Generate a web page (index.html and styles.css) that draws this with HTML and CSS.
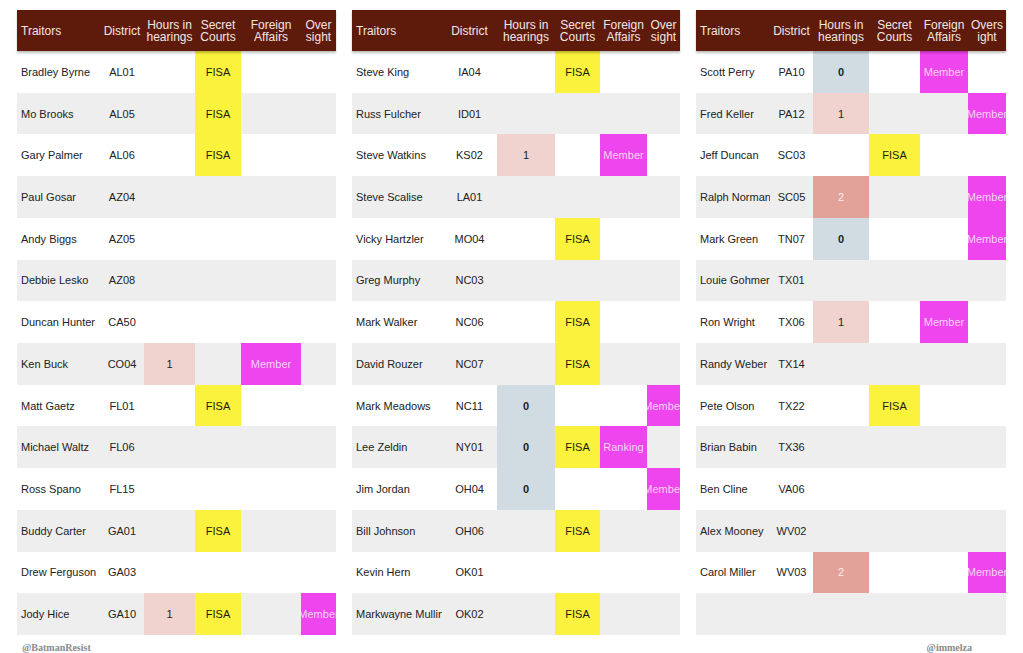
FILE: index.html
```html
<!DOCTYPE html>
<html>
<head>
<meta charset="utf-8">
<link rel="stylesheet" href="styles.css">
</head>
<body>
<div class="page">
  <div class="panels">
    <div class="panel t1">
      <div class="row head">
        <div class="cell name">Traitors</div><div class="cell">District</div><div class="cell">Hours in<br>hearings</div><div class="cell">Secret<br>Courts</div><div class="cell">Foreign<br>Affairs</div><div class="cell">Over<br>sight</div>
      </div>
      <div class="body">
        <div class="row"><div class="cell name">Bradley Byrne</div><div class="cell">AL01</div><div class="cell"></div><div class="cell fisa">FISA</div><div class="cell"></div><div class="cell"></div></div>
        <div class="row"><div class="cell name">Mo Brooks</div><div class="cell">AL05</div><div class="cell"></div><div class="cell fisa">FISA</div><div class="cell"></div><div class="cell"></div></div>
        <div class="row"><div class="cell name">Gary Palmer</div><div class="cell">AL06</div><div class="cell"></div><div class="cell fisa">FISA</div><div class="cell"></div><div class="cell"></div></div>
        <div class="row"><div class="cell name">Paul Gosar</div><div class="cell">AZ04</div><div class="cell"></div><div class="cell"></div><div class="cell"></div><div class="cell"></div></div>
        <div class="row"><div class="cell name">Andy Biggs</div><div class="cell">AZ05</div><div class="cell"></div><div class="cell"></div><div class="cell"></div><div class="cell"></div></div>
        <div class="row"><div class="cell name">Debbie Lesko</div><div class="cell">AZ08</div><div class="cell"></div><div class="cell"></div><div class="cell"></div><div class="cell"></div></div>
        <div class="row"><div class="cell name">Duncan Hunter</div><div class="cell">CA50</div><div class="cell"></div><div class="cell"></div><div class="cell"></div><div class="cell"></div></div>
        <div class="row"><div class="cell name">Ken Buck</div><div class="cell">CO04</div><div class="cell h1">1</div><div class="cell"></div><div class="cell mem">Member</div><div class="cell"></div></div>
        <div class="row"><div class="cell name">Matt Gaetz</div><div class="cell">FL01</div><div class="cell"></div><div class="cell fisa">FISA</div><div class="cell"></div><div class="cell"></div></div>
        <div class="row"><div class="cell name">Michael Waltz</div><div class="cell">FL06</div><div class="cell"></div><div class="cell"></div><div class="cell"></div><div class="cell"></div></div>
        <div class="row"><div class="cell name">Ross Spano</div><div class="cell">FL15</div><div class="cell"></div><div class="cell"></div><div class="cell"></div><div class="cell"></div></div>
        <div class="row"><div class="cell name">Buddy Carter</div><div class="cell">GA01</div><div class="cell"></div><div class="cell fisa">FISA</div><div class="cell"></div><div class="cell"></div></div>
        <div class="row"><div class="cell name">Drew Ferguson</div><div class="cell">GA03</div><div class="cell"></div><div class="cell"></div><div class="cell"></div><div class="cell"></div></div>
        <div class="row"><div class="cell name">Jody Hice</div><div class="cell">GA10</div><div class="cell h1">1</div><div class="cell fisa">FISA</div><div class="cell"></div><div class="cell mem">Member</div></div>
      </div>
    </div>

    <div class="panel t2">
      <div class="row head">
        <div class="cell name">Traitors</div><div class="cell">District</div><div class="cell">Hours in<br>hearings</div><div class="cell">Secret<br>Courts</div><div class="cell">Foreign<br>Affairs</div><div class="cell">Over<br>sight</div>
      </div>
      <div class="body">
        <div class="row"><div class="cell name">Steve King</div><div class="cell">IA04</div><div class="cell"></div><div class="cell fisa">FISA</div><div class="cell"></div><div class="cell"></div></div>
        <div class="row"><div class="cell name">Russ Fulcher</div><div class="cell">ID01</div><div class="cell"></div><div class="cell"></div><div class="cell"></div><div class="cell"></div></div>
        <div class="row"><div class="cell name">Steve Watkins</div><div class="cell">KS02</div><div class="cell h1">1</div><div class="cell"></div><div class="cell mem">Member</div><div class="cell"></div></div>
        <div class="row"><div class="cell name">Steve Scalise</div><div class="cell">LA01</div><div class="cell"></div><div class="cell"></div><div class="cell"></div><div class="cell"></div></div>
        <div class="row"><div class="cell name">Vicky Hartzler</div><div class="cell">MO04</div><div class="cell"></div><div class="cell fisa">FISA</div><div class="cell"></div><div class="cell"></div></div>
        <div class="row"><div class="cell name">Greg Murphy</div><div class="cell">NC03</div><div class="cell"></div><div class="cell"></div><div class="cell"></div><div class="cell"></div></div>
        <div class="row"><div class="cell name">Mark Walker</div><div class="cell">NC06</div><div class="cell"></div><div class="cell fisa">FISA</div><div class="cell"></div><div class="cell"></div></div>
        <div class="row"><div class="cell name">David Rouzer</div><div class="cell">NC07</div><div class="cell"></div><div class="cell fisa">FISA</div><div class="cell"></div><div class="cell"></div></div>
        <div class="row"><div class="cell name">Mark Meadows</div><div class="cell">NC11</div><div class="cell h0">0</div><div class="cell"></div><div class="cell"></div><div class="cell mem">Member</div></div>
        <div class="row"><div class="cell name">Lee Zeldin</div><div class="cell">NY01</div><div class="cell h0">0</div><div class="cell fisa">FISA</div><div class="cell mem">Ranking</div><div class="cell"></div></div>
        <div class="row"><div class="cell name">Jim Jordan</div><div class="cell">OH04</div><div class="cell h0">0</div><div class="cell"></div><div class="cell"></div><div class="cell mem">Member</div></div>
        <div class="row"><div class="cell name">Bill Johnson</div><div class="cell">OH06</div><div class="cell"></div><div class="cell fisa">FISA</div><div class="cell"></div><div class="cell"></div></div>
        <div class="row"><div class="cell name">Kevin Hern</div><div class="cell">OK01</div><div class="cell"></div><div class="cell"></div><div class="cell"></div><div class="cell"></div></div>
        <div class="row"><div class="cell name">Markwayne Mullin</div><div class="cell">OK02</div><div class="cell"></div><div class="cell fisa">FISA</div><div class="cell"></div><div class="cell"></div></div>
      </div>
    </div>

    <div class="panel t3">
      <div class="row head">
        <div class="cell name">Traitors</div><div class="cell">District</div><div class="cell">Hours in<br>hearings</div><div class="cell">Secret<br>Courts</div><div class="cell">Foreign<br>Affairs</div><div class="cell">Overs<br>ight</div>
      </div>
      <div class="body">
        <div class="row"><div class="cell name">Scott Perry</div><div class="cell">PA10</div><div class="cell h0">0</div><div class="cell"></div><div class="cell mem">Member</div><div class="cell"></div></div>
        <div class="row"><div class="cell name">Fred Keller</div><div class="cell">PA12</div><div class="cell h1">1</div><div class="cell"></div><div class="cell"></div><div class="cell mem">Member</div></div>
        <div class="row"><div class="cell name">Jeff Duncan</div><div class="cell">SC03</div><div class="cell"></div><div class="cell fisa">FISA</div><div class="cell"></div><div class="cell"></div></div>
        <div class="row"><div class="cell name">Ralph Norman</div><div class="cell">SC05</div><div class="cell h2">2</div><div class="cell"></div><div class="cell"></div><div class="cell mem">Member</div></div>
        <div class="row"><div class="cell name">Mark Green</div><div class="cell">TN07</div><div class="cell h0">0</div><div class="cell"></div><div class="cell"></div><div class="cell mem">Member</div></div>
        <div class="row"><div class="cell name">Louie Gohmert</div><div class="cell">TX01</div><div class="cell"></div><div class="cell"></div><div class="cell"></div><div class="cell"></div></div>
        <div class="row"><div class="cell name">Ron Wright</div><div class="cell">TX06</div><div class="cell h1">1</div><div class="cell"></div><div class="cell mem">Member</div><div class="cell"></div></div>
        <div class="row"><div class="cell name">Randy Weber</div><div class="cell">TX14</div><div class="cell"></div><div class="cell"></div><div class="cell"></div><div class="cell"></div></div>
        <div class="row"><div class="cell name">Pete Olson</div><div class="cell">TX22</div><div class="cell"></div><div class="cell fisa">FISA</div><div class="cell"></div><div class="cell"></div></div>
        <div class="row"><div class="cell name">Brian Babin</div><div class="cell">TX36</div><div class="cell"></div><div class="cell"></div><div class="cell"></div><div class="cell"></div></div>
        <div class="row"><div class="cell name">Ben Cline</div><div class="cell">VA06</div><div class="cell"></div><div class="cell"></div><div class="cell"></div><div class="cell"></div></div>
        <div class="row"><div class="cell name">Alex Mooney</div><div class="cell">WV02</div><div class="cell"></div><div class="cell"></div><div class="cell"></div><div class="cell"></div></div>
        <div class="row"><div class="cell name">Carol Miller</div><div class="cell">WV03</div><div class="cell h2">2</div><div class="cell"></div><div class="cell"></div><div class="cell mem">Member</div></div>
        <div class="row"><div class="cell name"></div><div class="cell"></div><div class="cell"></div><div class="cell"></div><div class="cell"></div><div class="cell"></div></div>
      </div>
    </div>
  </div>
  <div class="footer">
    <span class="credit">@BatmanResist</span>
    <span class="credit">@immelza</span>
  </div>
</div>
</body>
</html>
```

FILE: styles.css
```css
html, body {
  margin: 0;
  padding: 0;
  background: #ffffff;
}

.page {
  width: 1023px;
  height: 653px;
  overflow: hidden;
  font-family: "Liberation Sans", Arial, sans-serif;
  color: #222;
}

.panels {
  display: flex;
  gap: 16px;
  padding: 10px 0 0 17px;
}

.panel {
  display: flex;
  flex-direction: column;
}

.t1 { width: 319px; --cols: 83px 44px 51px 46px 60px 35px; }
.t2 { width: 328px; --cols: 90px 55px 58px 45px 47px 33px; }
.t3 { width: 310px; --cols: 74px 43px 56px 51px 48px 38px; }

.row {
  display: grid;
  grid-template-columns: var(--cols);
  flex: 1;
}

.head {
  flex: 0 0 41px;
  background: #5e1a0b;
  color: #f2e6e4;
  font-size: 12px;
  line-height: 12px;
  box-shadow: 0 2px 2px rgba(0, 0, 0, 0.25);
  position: relative;
  z-index: 1;
}

.body {
  height: 584px;
  display: flex;
  flex-direction: column;
}

.body .row {
  font-size: 11px;
}

.body .row:nth-child(even) {
  background: #eeeeee;
}

.cell {
  display: flex;
  align-items: center;
  justify-content: center;
  text-align: center;
  white-space: nowrap;
  overflow: hidden;
}

.cell.name {
  justify-content: flex-start;
  padding-left: 4px;
}

.fisa {
  background: #fbf23d;
  color: #1c1c10;
}

.h0 {
  background: #d0dce2;
  font-weight: bold;
}

.h1 {
  background: #f0d2ce;
}

.h2 {
  background: #e2a29a;
  color: #fbeeee;
}

.mem {
  background: #ee45ee;
  color: #f8d4f8;
}

.footer {
  display: flex;
  justify-content: space-between;
  padding: 7px 51px 0 22px;
}

.credit {
  font-family: "Liberation Serif", "Times New Roman", serif;
  font-weight: bold;
  font-size: 10px;
  line-height: 12px;
  color: #8a8a8a;
}
```
